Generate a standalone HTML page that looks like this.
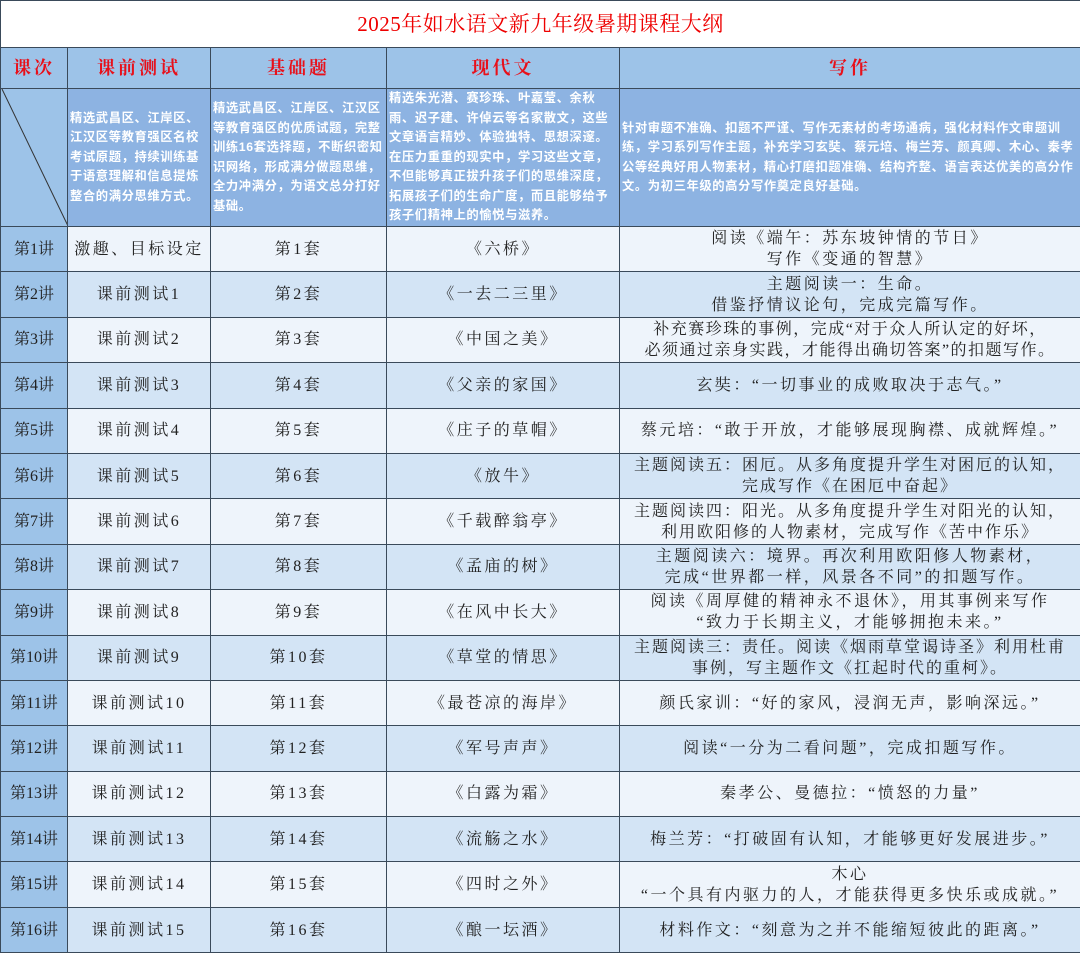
<!DOCTYPE html><html><head><meta charset="utf-8"><style>
body{margin:0;width:1080px;height:952px;overflow:hidden;background:#fff}
table{border-collapse:collapse;table-layout:fixed;width:1080px;position:absolute;left:0;top:0}
td{border:1px solid #3a4a5a;padding:0;text-align:center;font-family:"Liberation Serif","Noto Serif CJK SC",serif;font-size:16px;color:#222;line-height:21px;overflow:hidden;letter-spacing:2.5px;white-space:nowrap}
.t{height:46px;color:#e00;font-size:21px;background:#fff;letter-spacing:0.5px}
.h td{height:40px;background:#9dc3e8;color:#e8101a;font-size:18px;font-weight:bold;letter-spacing:3px}
.d td{height:137px;background:#8db3e2;color:#fff;font-family:"Liberation Sans","Noto Sans CJK SC",sans-serif;font-weight:bold;font-size:12.3px;line-height:19.5px;text-align:left;padding:0 1px 0 2px;letter-spacing:0.6px;white-space:normal;word-break:break-all}
.d td.f{background:#9dc3e8;position:relative}
tr.r td{height:44.4px}
tr.r td:first-child{background:#9dc3e8;letter-spacing:0}
tr.a td{background:#eef4fb}
tr.b td{background:#d3e4f5}
</style></head><body>
<table>
<colgroup><col style="width:67px"><col style="width:143px"><col style="width:176px"><col style="width:233px"><col style="width:461px"></colgroup>
<tr><td class="t" colspan="5">2025年如水语文新九年级暑期课程大纲</td></tr>
<tr class="h"><td>课次</td><td>课前测试</td><td>基础题</td><td>现代文</td><td>写作</td></tr>
<tr class="d"><td class="f"><svg width="67" height="137" style="position:absolute;left:0;top:0"><line x1="1" y1="0" x2="67" y2="137" stroke="#333" stroke-width="1"/></svg></td>
<td>精选武昌区、江岸区、江汉区等教育强区名校考试原题，持续训练基于语意理解和信息提炼整合的满分思维方式。</td>
<td>精选武昌区、江岸区、江汉区等教育强区的优质试题，完整训练16套选择题，不断织密知识网络，形成满分做题思维，全力冲满分，为语文总分打好基础。</td>
<td>精选朱光潜、赛珍珠、叶嘉莹、余秋雨、迟子建、许倬云等名家散文，这些文章语言精妙、体验独特、思想深邃。在压力重重的现实中，学习这些文章，不但能够真正拔升孩子们的思维深度，拓展孩子们的生命广度，而且能够给予孩子们精神上的愉悦与滋养。</td>
<td>针对审题不准确、扣题不严谨、写作无素材的考场通病，强化材料作文审题训练，学习系列写作主题，补充学习玄奘、蔡元培、梅兰芳、颜真卿、木心、秦孝公等经典好用人物素材，精心打磨扣题准确、结构齐整、语言表达优美的高分作文。为初三年级的高分写作奠定良好基础。</td></tr>
<tr class="r a"><td>第1讲</td><td>激趣、目标设定</td><td>第1套</td><td>《六桥》</td><td>阅读《端午：苏东坡钟情的节日》<br>写作《变通的智慧》</td></tr>
<tr class="r b"><td>第2讲</td><td>课前测试1</td><td>第2套</td><td>《一去二三里》</td><td>主题阅读一：生命。<br>借鉴抒情议论句，完成完篇写作。</td></tr>
<tr class="r a"><td>第3讲</td><td>课前测试2</td><td>第3套</td><td>《中国之美》</td><td style="letter-spacing:1.5px">补充赛珍珠的事例，完成“对于众人所认定的好坏，<br>必须通过亲身实践，才能得出确切答案”的扣题写作。</td></tr>
<tr class="r b"><td>第4讲</td><td>课前测试3</td><td>第4套</td><td>《父亲的家国》</td><td>玄奘：“一切事业的成败取决于志气。”</td></tr>
<tr class="r a"><td>第5讲</td><td>课前测试4</td><td>第5套</td><td>《庄子的草帽》</td><td>蔡元培：“敢于开放，才能够展现胸襟、成就辉煌。”</td></tr>
<tr class="r b"><td>第6讲</td><td>课前测试5</td><td>第6套</td><td>《放牛》</td><td style="letter-spacing:2px">主题阅读五：困厄。从多角度提升学生对困厄的认知，<br>完成写作《在困厄中奋起》</td></tr>
<tr class="r a"><td>第7讲</td><td>课前测试6</td><td>第7套</td><td>《千载醉翁亭》</td><td style="letter-spacing:2px">主题阅读四：阳光。从多角度提升学生对阳光的认知，<br>利用欧阳修的人物素材，完成写作《苦中作乐》</td></tr>
<tr class="r b"><td>第8讲</td><td>课前测试7</td><td>第8套</td><td>《孟庙的树》</td><td>主题阅读六：境界。再次利用欧阳修人物素材，<br>完成“世界都一样，风景各不同”的扣题写作。</td></tr>
<tr class="r a"><td>第9讲</td><td>课前测试8</td><td>第9套</td><td>《在风中长大》</td><td>阅读《周厚健的精神永不退休》，用其事例来写作<br>“致力于长期主义，才能够拥抱未来。”</td></tr>
<tr class="r b"><td>第10讲</td><td>课前测试9</td><td>第10套</td><td>《草堂的情思》</td><td style="letter-spacing:2px">主题阅读三：责任。阅读《烟雨草堂谒诗圣》利用杜甫<br>事例，写主题作文《扛起时代的重柯》。</td></tr>
<tr class="r a"><td>第11讲</td><td>课前测试10</td><td>第11套</td><td>《最苍凉的海岸》</td><td>颜氏家训：“好的家风，浸润无声，影响深远。”</td></tr>
<tr class="r b"><td>第12讲</td><td>课前测试11</td><td>第12套</td><td>《军号声声》</td><td>阅读“一分为二看问题”，完成扣题写作。</td></tr>
<tr class="r a"><td>第13讲</td><td>课前测试12</td><td>第13套</td><td>《白露为霜》</td><td>秦孝公、曼德拉：“愤怒的力量”</td></tr>
<tr class="r b"><td>第14讲</td><td>课前测试13</td><td>第14套</td><td>《流觞之水》</td><td>梅兰芳：“打破固有认知，才能够更好发展进步。”</td></tr>
<tr class="r a"><td>第15讲</td><td>课前测试14</td><td>第15套</td><td>《四时之外》</td><td>木心<br>“一个具有内驱力的人，才能获得更多快乐或成就。”</td></tr>
<tr class="r b"><td>第16讲</td><td>课前测试15</td><td>第16套</td><td>《酿一坛酒》</td><td>材料作文：“刻意为之并不能缩短彼此的距离。”</td></tr>
</table></body></html>
